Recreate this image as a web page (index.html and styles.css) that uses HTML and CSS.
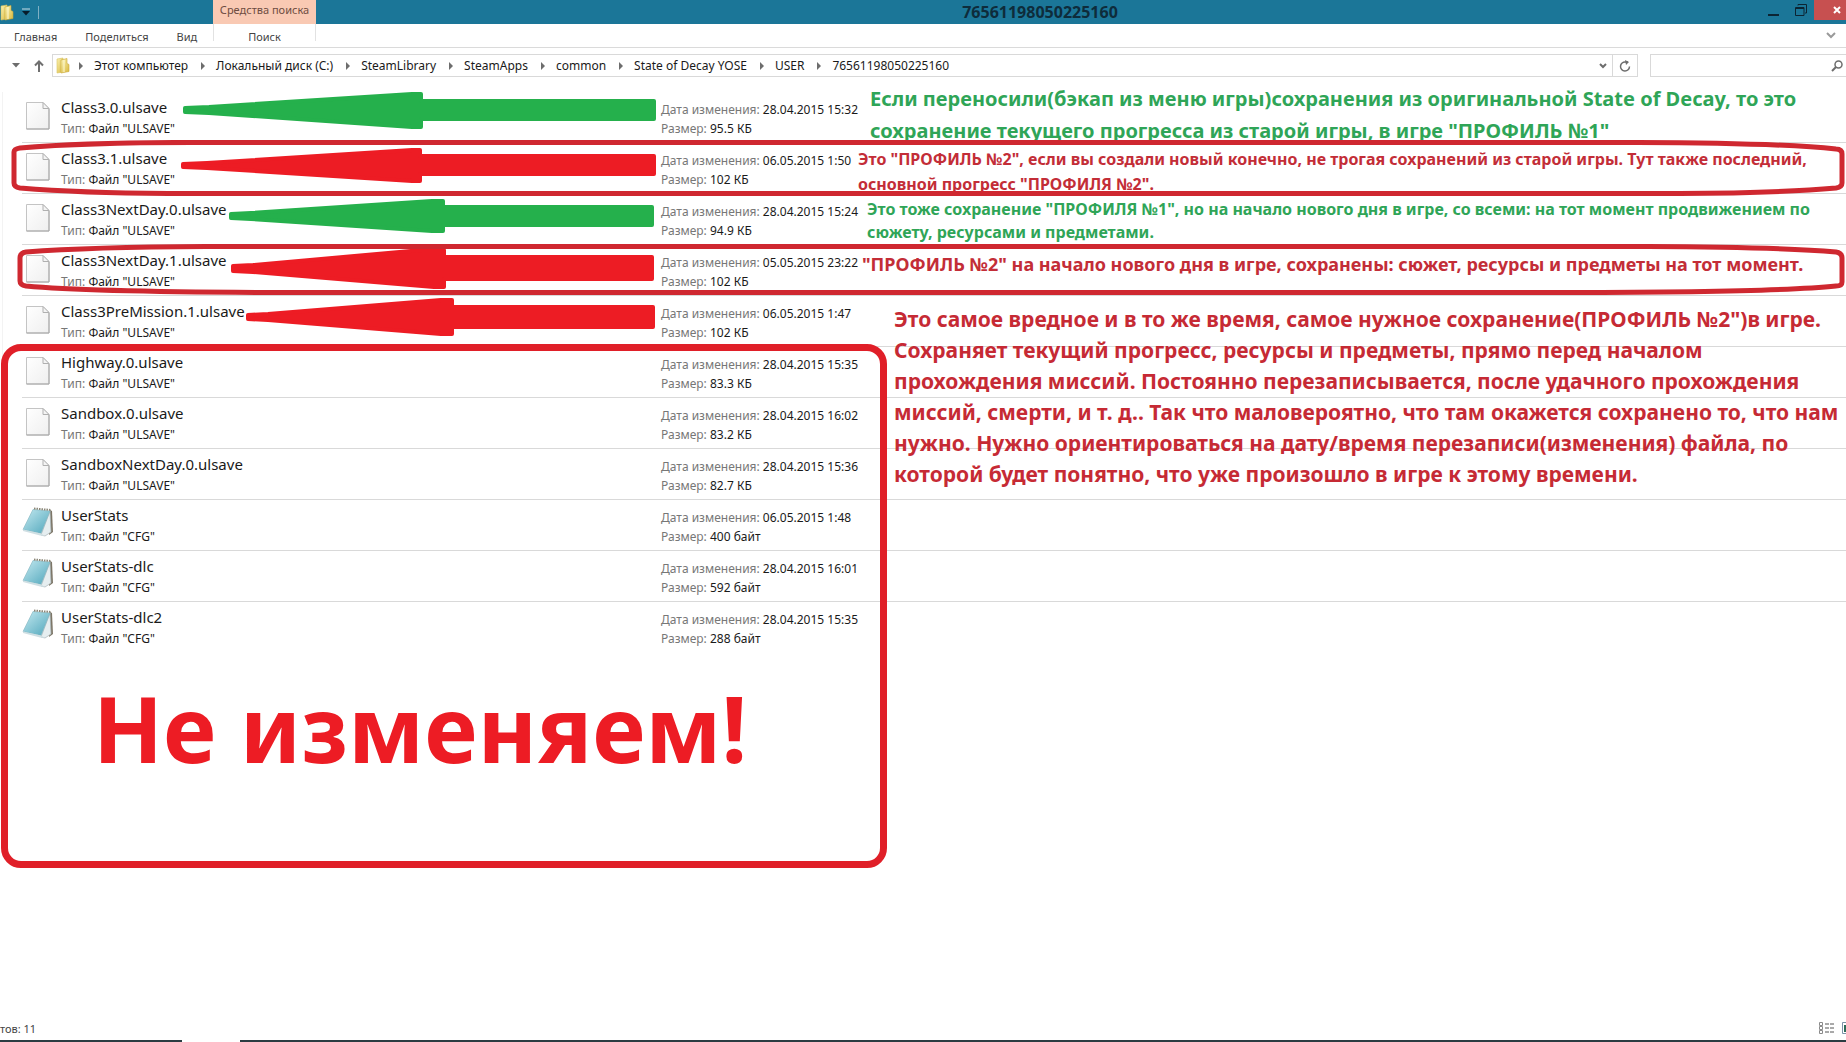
FILE: index.html
```html
<!DOCTYPE html>
<html lang="ru">
  <head>
    <meta charset="UTF-8" />
    <meta name="viewport" content="width=device-width, initial-scale=1.0" />
    <title>76561198050225160</title>
    <link rel="stylesheet" href="styles.css">
  </head>
  <body>
    <svg class="defs" width="0" height="0" aria-hidden="true">
      <defs>
        <linearGradient id="gFolder" x1="0" y1="0" x2="1" y2="1">
          <stop offset="0" stop-color="#fbf3b4" />
          <stop offset="1" stop-color="#d9b83e" />
        </linearGradient>
        <linearGradient id="gPage" x1="0" y1="0" x2="1" y2="1">
          <stop offset="0" stop-color="#ffffff" />
          <stop offset="1" stop-color="#efefef" />
        </linearGradient>
        <linearGradient id="gPad" x1="0" y1="0" x2="1" y2="1">
          <stop offset="0" stop-color="#c4e9f0" />
          <stop offset="1" stop-color="#4fa6bb" />
        </linearGradient>
        <symbol id="folder" viewBox="0 0 14 17">
          <path d="M1 2l6-1v14l-6 1z" fill="url(#gFolder)" stroke="#d8c25c" stroke-width=".6" />
          <path d="M5 3l6-1.5v5l2 1v7l-8 1.500z" fill="url(#gFolder)" stroke="#c9a838" stroke-width=".6" />
          <path d="M8 3v12" stroke="#fffbd8" />
        </symbol>
        <symbol id="file" viewBox="0 0 24 28">
          <path d="M.5.5h16.500l6 6v20.500H.5z" fill="url(#gPage)" stroke="#c4c4c4" />
          <path d="M.5 27h22.500V7" fill="none" stroke="#a6a6a6" />
          <path d="M17 .5v6h6z" fill="#f4f4f4" stroke="#b0b0b0" />
        </symbol>
        <symbol id="pad" viewBox="0 0 31 30">
          <path d="M28 3l2 1 1 21-4 3z" fill="#7d7667" />
          <path d="M28 4l1 21-6 4-4-1z" fill="#e6eef0" stroke="#a9b4b7" stroke-width=".7" />
          <path d="M11 2.500l17 1.500-9 22.500L1 22.500z" fill="url(#gPad)" stroke="#7fb4c0" stroke-width=".6" />
          <path d="M1 22.500l18 4 4 2.500-5-.5L1 24z" fill="#cfdfe3" />
          <path d="M12 1.500l17 1.500" stroke="#8b8778" stroke-width="2" stroke-dasharray="1.500 1" />
        </symbol>
      </defs>
    </svg>

    <header class="titlebar">
      <div class="quick">
        <svg class="icon-folder" width="14" height="17"><use href="#folder" /></svg>
        <svg width="8" height="8" viewBox="0 0 8 8"><path d="M0 1h8" stroke="#c9dde5" /><path d="M0 3h8L4 7.500z" fill="#071c2a" /></svg>
        <span class="divider"></span>
      </div>
      <div class="context">Средства поиска</div>
      <h1 class="title">76561198050225160</h1>
      <div class="window-buttons">
        <button type="button" aria-label="Свернуть">
          <svg width="12" height="14" viewBox="0 0 12 14"><path d="M0 12h11" stroke="#0c2433" stroke-width="2" /></svg>
        </button>
        <button type="button" aria-label="Развернуть">
          <svg width="12" height="12" viewBox="0 0 12 12"><path d="M3 1.500V.5h8.500V9H10" fill="none" stroke="#0c2433" /><path d="M.5 3.500h8.500v8H.5zM.5 4.500h8.500" fill="none" stroke="#0c2433" /></svg>
        </button>
        <button type="button" class="close" aria-label="Закрыть">
          <svg width="8" height="8" viewBox="0 0 8 8"><path d="M1 1l6 6M7 1L1 7" stroke="#fff" stroke-width="2" /></svg>
        </button>
      </div>
    </header>

    <nav class="ribbon">
      <div class="tabs">
        <a href="#">Главная</a>
        <a href="#">Поделиться</a>
        <a href="#">Вид</a>
      </div>
      <a href="#" class="search-tab">Поиск</a>
      <button type="button" class="expand" aria-label="Развернуть ленту">
        <svg width="10" height="7" viewBox="0 0 10 7"><path d="M1 1l4 4 4-4" fill="none" stroke="#9a9a9a" stroke-width="2" /></svg>
      </button>
    </nav>

    <div class="address">
      <div class="history">
        <svg width="8" height="5" viewBox="0 0 8 5"><path d="M0 0h8L4 4.500z" fill="#6d6d6d" /></svg>
        <svg width="10" height="12" viewBox="0 0 10 12"><path d="M5 12V1.500M1 5.500l4-4 4 4" fill="none" stroke="#707070" stroke-width="2" /></svg>
      </div>
      <div class="path">
        <svg class="icon-folder" width="14" height="17"><use href="#folder" /></svg>
        <ol class="crumbs">
          <li><a href="#">Этот компьютер</a></li>
          <li><a href="#">Локальный диск (C:)</a></li>
          <li><a href="#">SteamLibrary</a></li>
          <li><a href="#">SteamApps</a></li>
          <li><a href="#">common</a></li>
          <li><a href="#">State of Decay YOSE</a></li>
          <li><a href="#">USER</a></li>
          <li><a href="#">76561198050225160</a></li>
        </ol>
        <button type="button" class="drop" aria-label="Предыдущие расположения">
          <svg width="8" height="6" viewBox="0 0 8 6"><path d="M1 1l3 3 3-3" fill="none" stroke="#6d6d6d" stroke-width="2" /></svg>
        </button>
        <button type="button" class="refresh" aria-label="Обновить">
          <svg width="12" height="12" viewBox="0 0 12 12"><path d="M10.500 6.500A4.500 4.500 0 1 1 6.500 2H9" fill="none" stroke="#6d6d6d" stroke-width="1.500" /><path d="M6 0l4 2-3 3z" fill="#6d6d6d" /></svg>
        </button>
      </div>
      <form class="search">
        <input type="search" aria-label="Поиск" />
        <svg width="12" height="12" viewBox="0 0 12 12"><circle cx="7.500" cy="4.500" r="3.500" fill="none" stroke="#6d6d6d" stroke-width="1.500" /><path d="M5 7L1 11" stroke="#6d6d6d" stroke-width="2" /></svg>
      </form>
    </div>

    <main class="content">
      <ul class="files">
        <li>
          <svg class="file" width="24" height="28"><use href="#file" /></svg>
          <div class="name"><b>Class3.0.ulsave</b><p><span>Тип:</span> Файл "ULSAVE"</p></div>
          <div class="meta"><p><span>Дата изменения:</span> 28.04.2015 15:32</p><p><span>Размер:</span> 95.5 КБ</p></div>
          <p class="note note-old">Если переносили(бэкап из меню игры)сохранения из оригинальной State of Decay, то это<br>сохранение текущего прогресса из старой игры, в игре "ПРОФИЛЬ №1"</p>
        </li>
        <li>
          <svg class="file" width="24" height="28"><use href="#file" /></svg>
          <div class="name"><b>Class3.1.ulsave</b><p><span>Тип:</span> Файл "ULSAVE"</p></div>
          <div class="meta"><p><span>Дата изменения:</span> 06.05.2015 1:50</p><p><span>Размер:</span> 102 КБ</p></div>
          <p class="note note-new">Это "ПРОФИЛЬ №2", если вы создали новый конечно, не трогая сохранений из старой игры. Тут также последний,<br>основной прогресс "ПРОФИЛЯ №2".</p>
        </li>
        <li>
          <svg class="file" width="24" height="28"><use href="#file" /></svg>
          <div class="name"><b>Class3NextDay.0.ulsave</b><p><span>Тип:</span> Файл "ULSAVE"</p></div>
          <div class="meta"><p><span>Дата изменения:</span> 28.04.2015 15:24</p><p><span>Размер:</span> 94.9 КБ</p></div>
          <p class="note note-old-day">Это тоже сохранение "ПРОФИЛЯ №1", но на начало нового дня в игре, со всеми: на тот момент продвижением по<br>сюжету, ресурсами и предметами.</p>
        </li>
        <li>
          <svg class="file" width="24" height="28"><use href="#file" /></svg>
          <div class="name"><b>Class3NextDay.1.ulsave</b><p><span>Тип:</span> Файл "ULSAVE"</p></div>
          <div class="meta"><p><span>Дата изменения:</span> 05.05.2015 23:22</p><p><span>Размер:</span> 102 КБ</p></div>
          <p class="note note-new-day">"ПРОФИЛЬ №2" на начало нового дня в игре, сохранены: сюжет, ресурсы и предметы на тот момент.</p>
        </li>
        <li>
          <svg class="file" width="24" height="28"><use href="#file" /></svg>
          <div class="name"><b>Class3PreMission.1.ulsave</b><p><span>Тип:</span> Файл "ULSAVE"</p></div>
          <div class="meta"><p><span>Дата изменения:</span> 06.05.2015 1:47</p><p><span>Размер:</span> 102 КБ</p></div>
          <p class="note note-mission">Это самое вредное и в то же время, самое нужное сохранение(ПРОФИЛЬ №2")в игре.<br>Сохраняет текущий прогресс, ресурсы и предметы, прямо перед началом<br>прохождения миссий. Постоянно перезаписывается, после удачного прохождения<br>миссий, смерти, и т. д.. Так что маловероятно, что там окажется сохранено то, что нам<br>нужно. Нужно ориентироваться на дату/время перезаписи(изменения) файла, по<br>которой будет понятно, что уже произошло в игре к этому времени.</p>
        </li>
        <li>
          <svg class="file" width="24" height="28"><use href="#file" /></svg>
          <div class="name"><b>Highway.0.ulsave</b><p><span>Тип:</span> Файл "ULSAVE"</p></div>
          <div class="meta"><p><span>Дата изменения:</span> 28.04.2015 15:35</p><p><span>Размер:</span> 83.3 КБ</p></div>
        </li>
        <li>
          <svg class="file" width="24" height="28"><use href="#file" /></svg>
          <div class="name"><b>Sandbox.0.ulsave</b><p><span>Тип:</span> Файл "ULSAVE"</p></div>
          <div class="meta"><p><span>Дата изменения:</span> 28.04.2015 16:02</p><p><span>Размер:</span> 83.2 КБ</p></div>
        </li>
        <li>
          <svg class="file" width="24" height="28"><use href="#file" /></svg>
          <div class="name"><b>SandboxNextDay.0.ulsave</b><p><span>Тип:</span> Файл "ULSAVE"</p></div>
          <div class="meta"><p><span>Дата изменения:</span> 28.04.2015 15:36</p><p><span>Размер:</span> 82.7 КБ</p></div>
        </li>
        <li>
          <svg class="pad" width="31" height="30"><use href="#pad" /></svg>
          <div class="name"><b>UserStats</b><p><span>Тип:</span> Файл "CFG"</p></div>
          <div class="meta"><p><span>Дата изменения:</span> 06.05.2015 1:48</p><p><span>Размер:</span> 400 байт</p></div>
        </li>
        <li>
          <svg class="pad" width="31" height="30"><use href="#pad" /></svg>
          <div class="name"><b>UserStats-dlc</b><p><span>Тип:</span> Файл "CFG"</p></div>
          <div class="meta"><p><span>Дата изменения:</span> 28.04.2015 16:01</p><p><span>Размер:</span> 592 байт</p></div>
        </li>
        <li>
          <svg class="pad" width="31" height="30"><use href="#pad" /></svg>
          <div class="name"><b>UserStats-dlc2</b><p><span>Тип:</span> Файл "CFG"</p></div>
          <div class="meta"><p><span>Дата изменения:</span> 28.04.2015 15:35</p><p><span>Размер:</span> 288 байт</p></div>
        </li>
      </ul>

      <!-- стрелки от даты к имени файла -->
      <svg class="arrows" width="880" height="260" viewBox="0 0 880 260" aria-hidden="true">
        <g fill="#25b04c" stroke="#25b04c" stroke-width="4" stroke-linejoin="round">
          <path d="M185 16l24-1L412 2h9v7h233v18H421v8h-9L209 21l-24-1z" />
          <path d="M231 122l20-1 181-12h11v6h209v18H443v6h-11L251 127l-20-1z" />
        </g>
        <g fill="#ed1c24" stroke="#ed1c24" stroke-width="4" stroke-linejoin="round">
          <path d="M183 72l24-1L412 58h8v6h234v18H420v7h-8L207 76l-24-1z" />
          <path d="M233 174l20-1 169-15h22v7h208v22H444v8h-10L253 180l-20-1z" />
          <path d="M248 223l20-1 173-14h11v7h201v20H452v7h-11L268 228l-20-1z" />
        </g>
      </svg>

      <!-- обводка строк второго профиля -->
      <svg class="ring ring-first" viewBox="0 0 1846 60" preserveAspectRatio="none" aria-hidden="true">
        <path d="M14 12Q14 9 20 8Q90 2 210 2.500H1638Q1780 3 1836 9Q1842 9 1842 14V43Q1842 47 1836 48Q1780 53 1680 53.500H168Q80 53 20 48Q14 47 14 43z" />
      </svg>
      <svg class="ring ring-second" viewBox="0 0 1846 60" preserveAspectRatio="none" aria-hidden="true">
        <path d="M20 14Q20 9 26 8Q90 3 206 2.500H1648Q1780 3 1836 8Q1842 9 1842 14V38Q1842 42 1836 42Q1780 48 1569 48.500H284Q90 48 26 42Q20 41 20 37z" />
      </svg>

      <div class="frozen">
        <strong>Не изменяем!</strong>
      </div>
    </main>

    <footer class="status">
      <span>тов: 11</span>
      <div class="views">
        <svg width="15" height="13" viewBox="0 0 15 13"><g fill="none" stroke="#8a8a8a"><path d="M.5.500h3v3h-3zM.5 4.500h3v3h-3zM.5 8.500h3v3h-3z" /><path d="M6 2h4M11 2h4M6 6h4M11 6h4M6 10h4M11 10h4" stroke="#555" /></g></svg>
        <svg width="4" height="13" viewBox="0 0 4 13"><path d="M.5 .5h5v11h-5z" fill="#fff" stroke="#7b93a8" /><path d="M2 3h2v7H2z" fill="#2d6b58" /></svg>
      </div>
    </footer>
    <div class="taskbar"><span></span></div>
  </body>
</html>
```
FILE: styles.css
```css
* {
  box-sizing: border-box;
}
body {
  margin: 0;
  min-height: 100vh;
  display: flex;
  flex-direction: column;
  overflow-x: hidden;
  background-color: #fff;
  color: #1a1a1a;
  font-family: "Noto Sans", "Open Sans", sans-serif;
  font-size: 12px;
}
p,
ul,
ol,
h1 {
  margin: 0;
  padding: 0;
}
ul,
ol {
  list-style: none;
}
a {
  color: inherit;
  text-decoration: none;
}
button {
  display: flex;
  align-items: center;
  justify-content: center;
  padding: 0;
  border: none;
  background: none;
  cursor: pointer;
}
.defs {
  position: absolute;
}

/* заголовок окна */
.titlebar {
  display: flex;
  height: 24px;
  background-color: #1b7698;
}
.quick {
  display: flex;
  align-items: center;
  gap: 8px;
  width: 213px;
}
.divider {
  width: 2px;
  height: 13px;
  border-left: 1px solid #7fb0c4;
}
.context {
  width: 103px;
  background-color: #f9c9b3;
  color: #6d4c41;
  font-size: 11px;
  line-height: 20px;
  text-align: center;
}
.title {
  flex: 1;
  padding-left: 4px;
  color: #0e2c3b;
  font-size: 16px;
  line-height: 25px;
  text-align: center;
}
.window-buttons {
  display: flex;
  width: 86px;
  height: 20px;
}
.window-buttons button {
  width: 27px;
}
.window-buttons .close {
  width: 32px;
  padding-left: 14px;
  background-color: #c75050;
}

/* лента */
.ribbon {
  display: flex;
  height: 24px;
  border-bottom: 1px solid #dadada;
  color: #444;
  font-size: 11px;
  line-height: 26px;
}
.tabs {
  display: flex;
  gap: 28px;
  width: 213px;
  padding-left: 14px;
}
.search-tab {
  width: 103px;
  height: 17px;
  border: solid #e2e2e2;
  border-width: 0 1px;
  text-align: center;
}
.expand {
  margin-left: auto;
  padding-right: 10px;
}

/* адресная строка */
.address {
  display: flex;
  padding: 6px 0 15px;
}
.history {
  display: flex;
  align-items: center;
  justify-content: flex-end;
  gap: 14px;
  width: 52px;
  padding-right: 8px;
}
.path {
  display: flex;
  flex: 1;
  align-items: center;
  height: 23px;
  padding-left: 3px;
  border: 1px solid #d9d9d9;
}
.crumbs {
  display: flex;
  flex: 1;
  padding-left: 9px;
}
.crumbs li {
  display: flex;
  align-items: center;
  margin-right: 13px;
}
.crumbs li::before {
  content: "";
  margin-right: 11px;
  border: solid transparent;
  border-width: 4px 0 4px 4px;
  border-left-color: #6d6d6d;
}
.drop {
  width: 18px;
}
.refresh {
  width: 25px;
  height: 21px;
  border-left: 1px solid #d9d9d9;
}
.search {
  display: flex;
  align-items: center;
  width: 196px;
  margin-left: 12px;
  padding-right: 3px;
  border: 1px solid #d9d9d9;
  border-right: none;
}
.search input {
  flex: 1;
  min-width: 0;
  border: none;
  outline: none;
  font: inherit;
}

/* список файлов */
.content {
  position: relative;
  flex: 1;
}
.files {
  margin-left: 2px;
  padding-left: 19px;
  border-left: 1px solid #f3f3f3;
}
.files li {
  position: relative;
  display: grid;
  grid-template-columns: 39px 600px 1fr;
  height: 51px;
  border-bottom: 1px solid #d9d9d9;
}
.files li:last-child {
  border-bottom: none;
}
.file {
  margin: 10px 0 0 4px;
}
.pad {
  margin-top: 7px;
}
.name {
  padding-top: 4px;
  line-height: 19px;
}
.name b {
  display: block;
  font-size: 15px;
  font-weight: normal;
  line-height: 23px;
}
.meta {
  padding-top: 8px;
  line-height: 19px;
}
.files span {
  color: #777;
}

/* пояснения поверх списка */
.note {
  position: absolute;
  z-index: 1;
  font-size: 16px;
  font-weight: bold;
  white-space: nowrap;
}
.note-old {
  top: -9px;
  left: 848px;
  color: #2fa557;
  font-size: 20px;
  line-height: 32px;
}
.note-new {
  top: 4px;
  left: 836px;
  color: #c32d37;
  line-height: 25px;
}
.note-old-day {
  top: 4px;
  left: 845px;
  color: #2fa557;
  line-height: 23px;
}
.note-new-day {
  top: 7px;
  left: 840px;
  color: #c32d37;
  font-size: 18px;
  line-height: 24px;
}
.note-mission {
  top: 8px;
  left: 872px;
  color: #c62a34;
  font-size: 21px;
  line-height: 31px;
}
.arrows {
  position: absolute;
  top: 0;
  left: 0;
}
.ring {
  position: absolute;
  z-index: 2;
  left: 0;
  width: 100%;
  height: 60px;
  fill: none;
  stroke: #cf2830;
  stroke-width: 5px;
}
.ring-first {
  top: 48px;
}
.ring-second {
  top: 152px;
}
.frozen {
  position: absolute;
  top: 252px;
  left: 1px;
  width: 886px;
  height: 524px;
  padding: 327px 0 0 85px;
  border: 7px solid #e01f28;
  border-radius: 20px;
  color: #ed1c24;
  font-size: 91px;
  line-height: 100px;
}

/* строка состояния */
.status {
  display: flex;
  align-items: center;
  justify-content: space-between;
  height: 23px;
  color: #444;
  font-size: 11px;
}
.views {
  display: flex;
  gap: 8px;
}
.taskbar {
  height: 2px;
  padding-left: 182px;
  background-color: #2b3c42;
}
.taskbar span {
  display: block;
  width: 58px;
  height: 2px;
  background-color: #fff;
}
```
